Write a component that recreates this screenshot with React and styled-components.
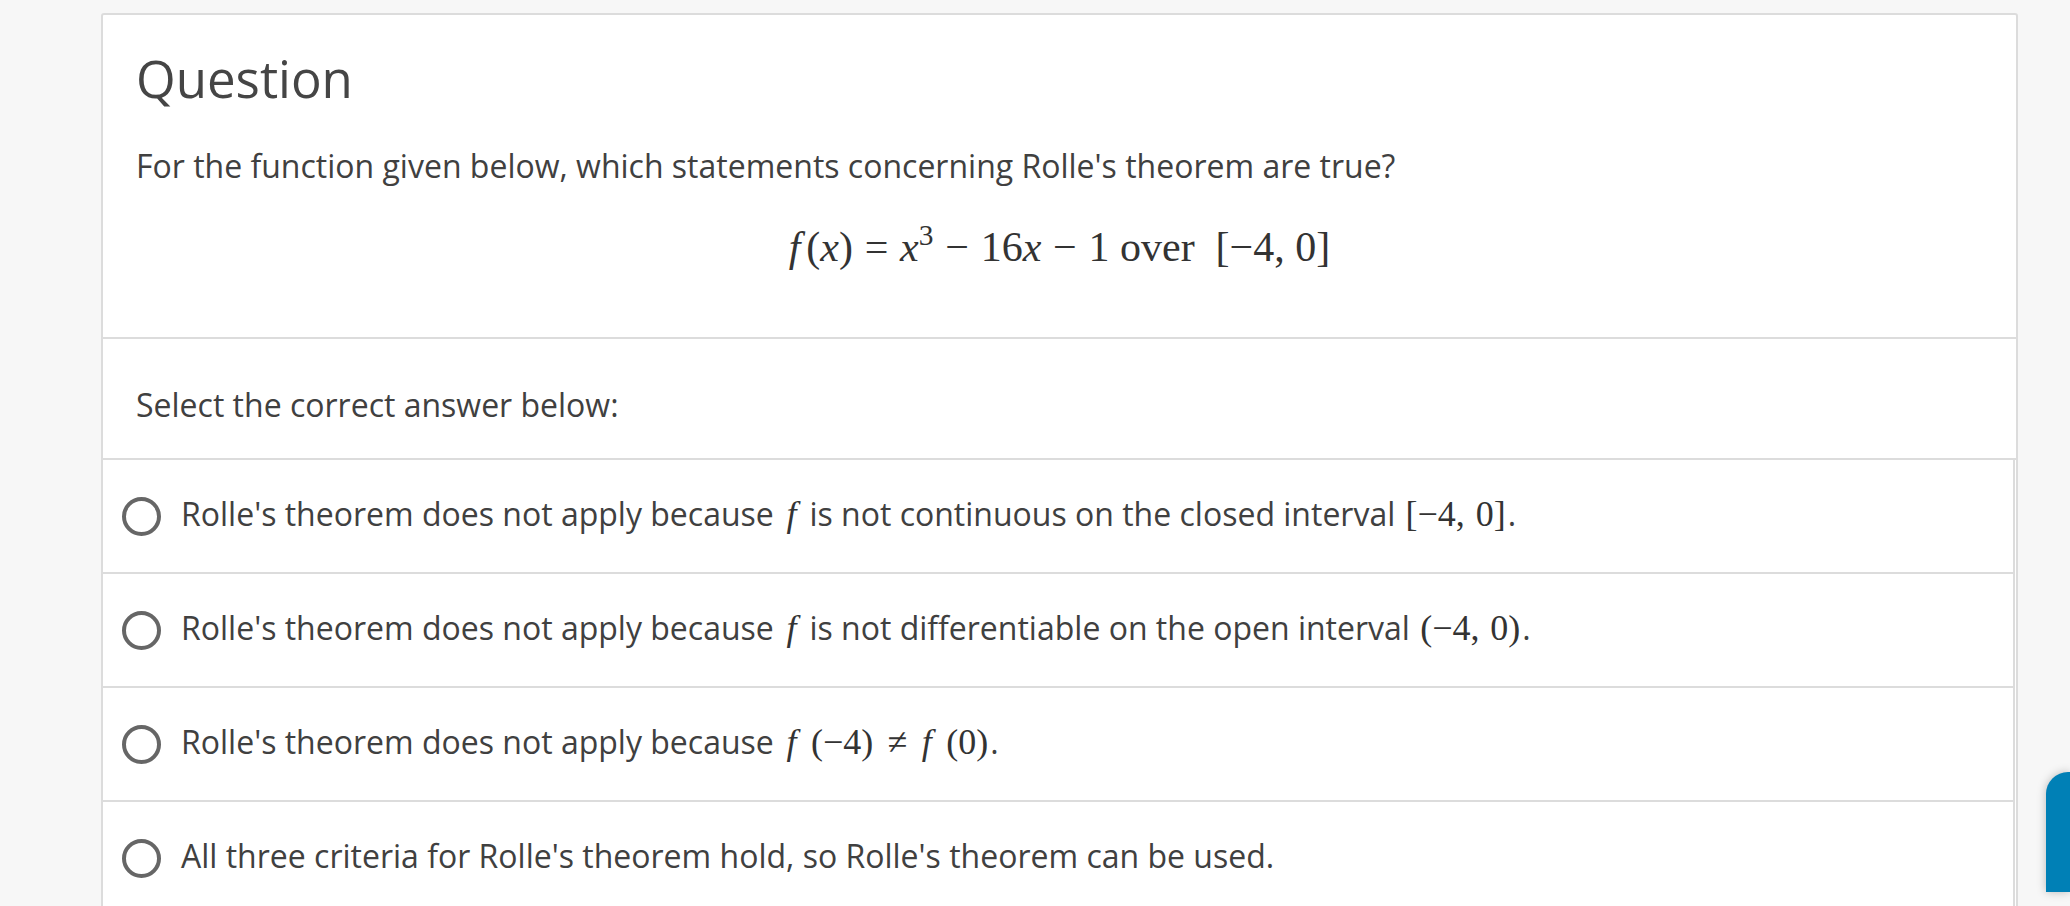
import React from 'react';
import styled, { createGlobalStyle } from 'styled-components';

const GlobalStyle = createGlobalStyle`
    html, body {
        margin: 0;
        padding: 0;
        background: #f7f7f7;
        font-family: "Open Sans", "Liberation Sans", sans-serif;
        color: #404040;
    }
`;

const Page = styled.div`
    padding: 13px 0 0 101px;
    width: 1917px;
`;

const Card = styled.div`
    background: #fff;
    border: 2px solid #dcdcdc;
    border-radius: 3px;
`;

const Header = styled.div`
    padding: 33px 33px 0;
    border-bottom: 2px solid #dcdcdc;
    height: 324px;
    box-sizing: border-box;
`;

const Title = styled.h2`
    margin: 0;
    font-size: 51px;
    font-weight: 400;
    line-height: 1.2;
    color: #454545;
`;

const Prompt = styled.p`
    margin: 36px 0 0;
    font-size: 32px;
    line-height: 1.3;
`;

const Formula = styled.div`
    margin-top: 36px;
    text-align: center;
    font-family: "Liberation Serif", "DejaVu Serif", serif;
    font-size: 42px;
    color: #333;
`;

const Op = styled.span`
    margin: 0 ${(p) => p.$space || 0.28}em;
`;

const Sup = styled.sup`
    font-size: 0.7em;
    vertical-align: 0;
    position: relative;
    top: -0.55em;
`;

const I = styled.i`
    font-style: italic;
    margin-right: ${(p) => p.$gap || 0}em;
`;

const Instruction = styled.div`
    height: 121px;
    box-sizing: border-box;
    padding: 12px 33px 0;
    display: flex;
    align-items: center;
    font-size: 32px;
    border-bottom: 2px solid #dcdcdc;
`;

const OptionList = styled.div`
    margin-right: 1px;
    border-right: 2px solid #dcdcdc;
`;

const Option = styled.label`
    display: flex;
    align-items: center;
    height: 112px;
    box-sizing: content-box;
    padding: 0 0 0 19px;
    border-bottom: 2px solid #dcdcdc;
    font-size: 32px;
    cursor: pointer;
`;

const OptionText = styled.span`
    position: relative;
    top: -3px;
`;

const Radio = styled.span`
    width: 39px;
    height: 39px;
    box-sizing: border-box;
    border: 4px solid #666;
    border-radius: 50%;
    flex-shrink: 0;
    margin-right: 20px;
`;

const Math = styled.span`
    font-family: "Liberation Serif", "DejaVu Serif", serif;
    font-size: 36px;
    color: #333;
    margin: 0 2px;
    word-spacing: 0.05em;
`;

const SideTab = styled.div`
    position: fixed;
    right: 0;
    bottom: 14px;
    width: 24px;
    height: 120px;
    background: #0080b6;
    border-top-left-radius: 22px;
    box-shadow: 0 0 10px rgba(0, 0, 0, 0.25);
`;

const options = [
    <>Rolle's theorem does not apply because<Math> <I>f</I> </Math>is not continuous on the closed interval <Math>[−4, 0]</Math>.</>,
    <>Rolle's theorem does not apply because<Math> <I>f</I> </Math>is not differentiable on the open interval <Math>(−4, 0)</Math>.</>,
    <>Rolle's theorem does not apply because<Math> <I $gap={0.4}>f</I>(−4)<Op $space={0.4}>≠</Op><I $gap={0.4}>f</I>(0)</Math>.</>,
    <>All three criteria for Rolle's theorem hold, so Rolle's theorem can be used.</>
];

export default function App() {
    return (
        <>
            <GlobalStyle />
            <Page>
                <Card>
                    <Header>
                        <Title>Question</Title>
                        <Prompt>For the function given below, which statements concerning Rolle's theorem are true?</Prompt>
                        <Formula>
                            <I $gap={0.14}>f</I>(<I>x</I>)<Op>=</Op><I>x</I><Sup>3</Sup><Op>−</Op>16<I>x</I><Op>−</Op>1 over&nbsp; [−4, 0]
                        </Formula>
                    </Header>
                    <Instruction>Select the correct answer below:</Instruction>
                    <OptionList>
                        {options.map((content, i) => (
                            <Option key={i}>
                                <Radio />
                                <OptionText>{content}</OptionText>
                            </Option>
                        ))}
                    </OptionList>
                </Card>
            </Page>
            <SideTab />
        </>
    );
}
